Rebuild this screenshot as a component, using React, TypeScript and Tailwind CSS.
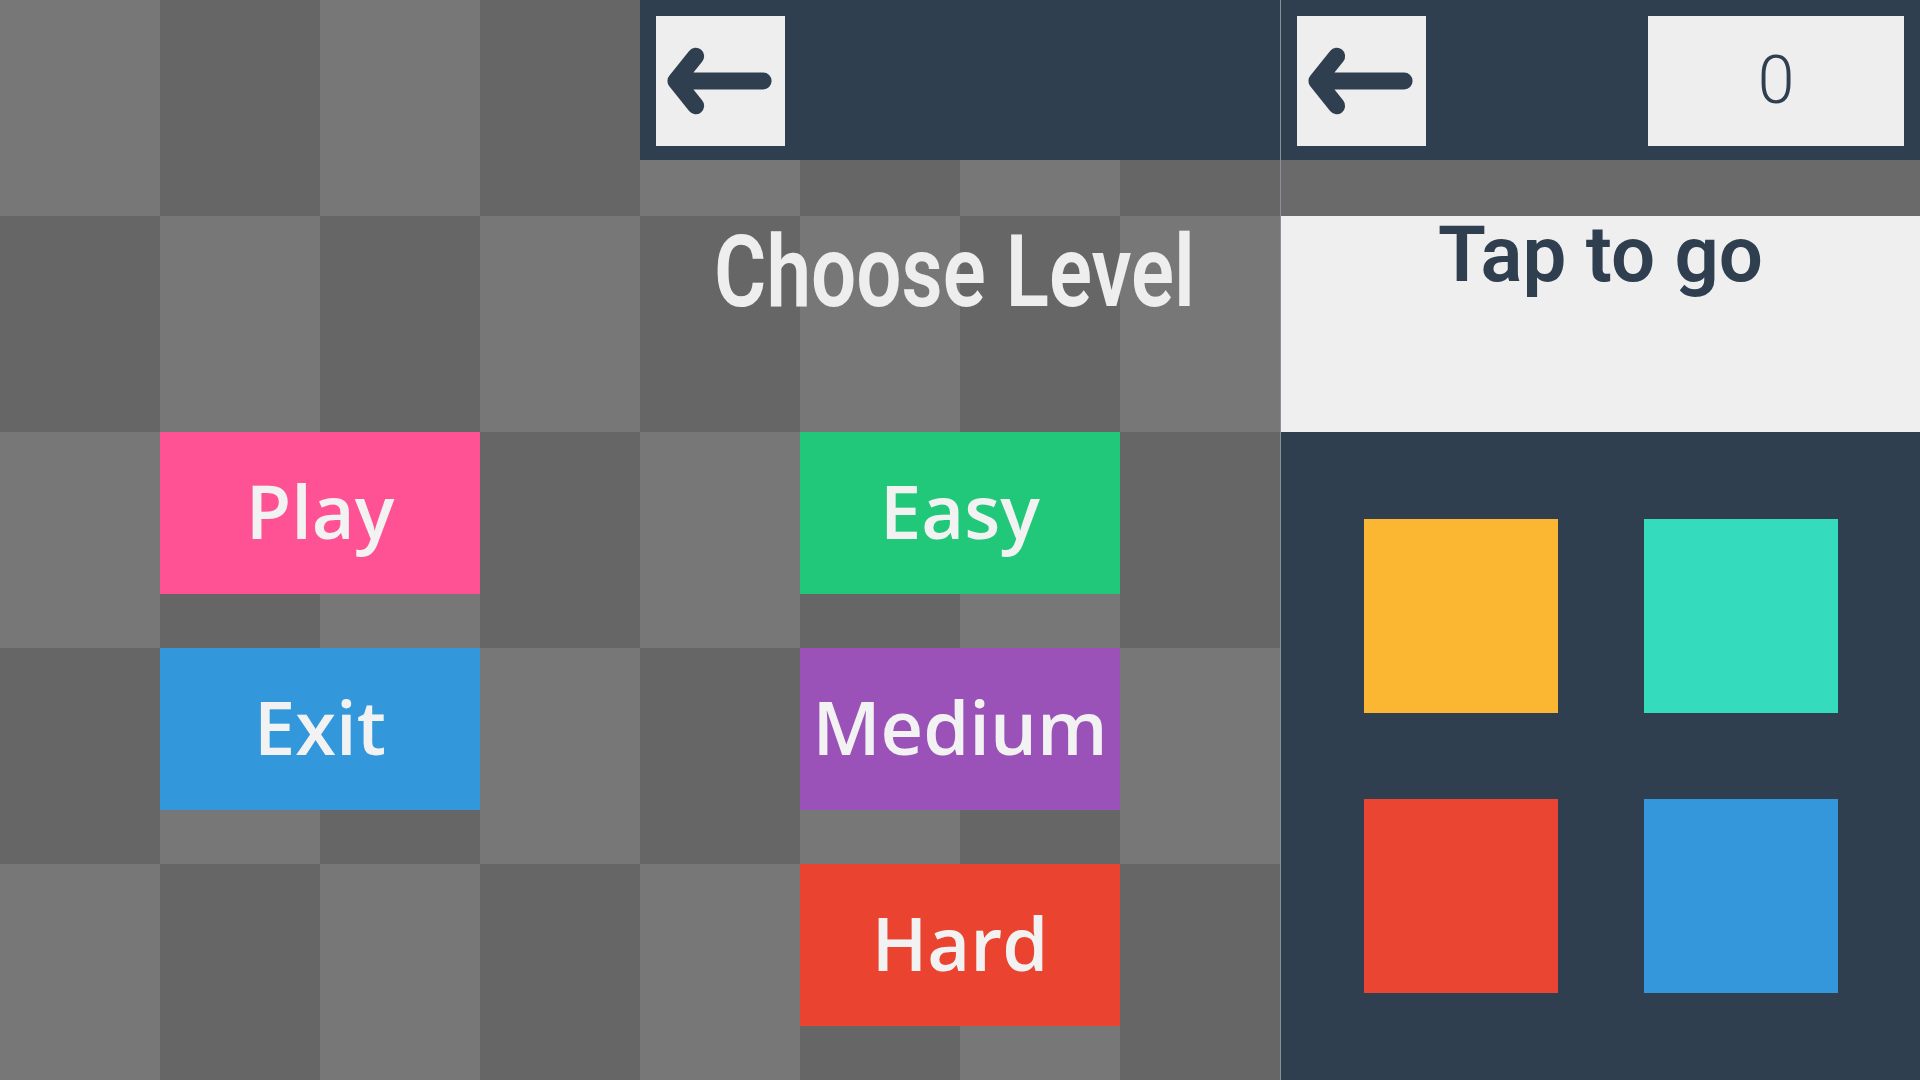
import type { ReactNode } from "react";

const NAVY = "#2f3f50";

function BackArrow() {
  return (
    <svg viewBox="0 0 130 130" className="h-full w-full" fill="none">
      <path
        d="M108 65H20M40 40L20 65L40 90"
        stroke={NAVY}
        strokeWidth={17}
        strokeLinecap="round"
        strokeLinejoin="round"
      />
    </svg>
  );
}

function BackButton() {
  return (
    <button className="h-[130px] w-[129px] shrink-0 bg-[#eeeeee]">
      <BackArrow />
    </button>
  );
}

interface MenuButtonProps {
  className: string;
  children: ReactNode;
}

// Flat coloured button sitting on the checker tiles
function MenuButton({ className, children }: MenuButtonProps) {
  return (
    <button
      className={`col-span-2 col-start-2 flex h-[162px] items-center justify-center self-start pb-1 font-['Open_Sans',sans-serif] text-[74px] font-semibold leading-none text-[#f2f2f2] ${className}`}
    >
      {children}
    </button>
  );
}

export default function App() {
  return (
    <div className="flex h-[1080px] w-[1920px] overflow-hidden bg-[#666666] bg-[image:repeating-conic-gradient(#666666_0_25%,#777777_0_50%)] bg-[length:320px_432px]">
      {/* Main menu */}
      <section className="grid w-[640px] shrink-0 grid-cols-4 grid-rows-[repeat(5,216px)]">
        <MenuButton className="row-start-3 bg-[#ff5294]">Play</MenuButton>
        <MenuButton className="row-start-4 bg-[#3397dc]">Exit</MenuButton>
      </section>

      {/* Level select */}
      <section className="grid w-[640px] shrink-0 grid-cols-4 grid-rows-[repeat(5,216px)]">
        <header className="col-span-4 row-start-1 flex h-[160px] items-start self-start bg-[#2f3f50] p-4">
          <BackButton />
        </header>
        <div className="col-span-4 row-start-2 self-start pt-[6px] pr-3 text-center">
          <span className="inline-block origin-center scale-x-[0.8] font-['Roboto',sans-serif] text-[100px] font-semibold leading-none text-[#eeeeee]">
            Choose Level
          </span>
        </div>
        <MenuButton className="row-start-3 bg-[#22c87a]">Easy</MenuButton>
        <MenuButton className="row-start-4 bg-[#9a52b9]">Medium</MenuButton>
        <MenuButton className="row-start-5 bg-[#ea4430]">Hard</MenuButton>
      </section>

      {/* Game board */}
      <section className="flex w-[640px] shrink-0 flex-col border-l border-[#8a9099]">
        <header className="flex h-[160px] items-start justify-between bg-[#2f3f50] p-4">
          <BackButton />
          <div className="flex h-[130px] w-[256px] items-center justify-center bg-[#eeeeee] font-['Roboto',sans-serif] text-[66px] font-light leading-none text-[#2f3f50]">
            0
          </div>
        </header>
        <div className="h-[56px] bg-[#6a6a6a]" />
        <div className="h-[216px] bg-[#efefef] text-center">
          <span className="inline-block font-['Roboto',sans-serif] text-[78px] font-semibold leading-none text-[#2f3f50]">
            Tap to go
          </span>
        </div>
        <div className="flex flex-1 items-center justify-center bg-[#2f3f50]">
          <div className="grid grid-cols-2 gap-[86px]">
            <div className="h-[194px] w-[194px] bg-[#fcb732]" />
            <div className="h-[194px] w-[194px] bg-[#34dbbc]" />
            <div className="h-[194px] w-[194px] bg-[#ea4433]" />
            <div className="h-[194px] w-[194px] bg-[#3496db]" />
          </div>
        </div>
      </section>
    </div>
  );
}
